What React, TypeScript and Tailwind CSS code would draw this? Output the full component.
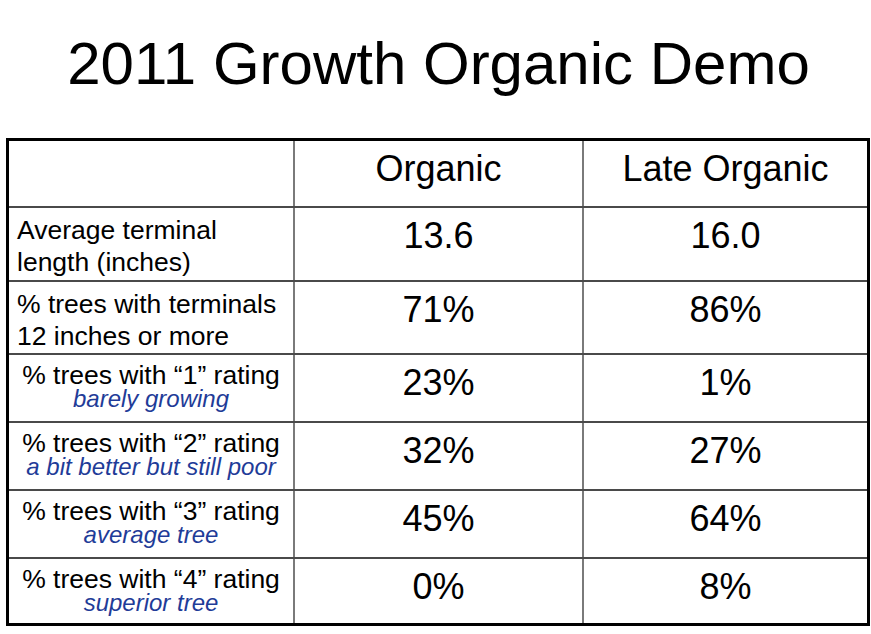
const font = "font-['Liberation_Sans',Arial,sans-serif]";

type Row = {
  label: string[];
  note?: string;
  organic: string;
  late: string;
  h: string;
};

const rows: Row[] = [
  { label: ["Average terminal", "length (inches)"], organic: "13.6", late: "16.0", h: "h-[74px]" },
  { label: ["% trees with terminals", "12 inches or more"], organic: "71%", late: "86%", h: "h-[73px]" },
  { label: ["% trees with \u201c1\u201d rating"], note: "barely growing", organic: "23%", late: "1%", h: "h-[68px]" },
  { label: ["% trees with \u201c2\u201d rating"], note: "a bit better but still poor", organic: "32%", late: "27%", h: "h-[68px]" },
  { label: ["% trees with \u201c3\u201d rating"], note: "average tree", organic: "45%", late: "64%", h: "h-[68px]" },
  { label: ["% trees with \u201c4\u201d rating"], note: "superior tree", organic: "0%", late: "8%", h: "h-[66px]" },
];

function LabelCell({ row }: { row: Row }) {
  // rating rows are centred with a blue italic note under them
  if (row.note) {
    return (
      <div className="pt-[7px] text-center text-black">
        <div className="text-[26.5px] leading-[26px]">{row.label[0]}</div>
        <div className="text-[24px] leading-[22px] italic text-[#1f3c98]">{row.note}</div>
      </div>
    );
  }
  return (
    <div className="pt-[6px] pl-[8px] text-[26.5px] leading-[32px] text-black">
      {row.label.map((l) => (
        <div key={l}>{l}</div>
      ))}
    </div>
  );
}

export default function App() {
  return (
    <div className={`w-[871px] h-[634px] bg-white overflow-hidden ${font}`}>
      <div className="h-[138px] pt-[34px] text-center text-[60px] leading-[60px] text-black pl-[6px]">
        2011 Growth Organic Demo
      </div>
      <div className="ml-[6px] w-[864px] border-[3px] border-black">
        <div className="grid grid-cols-[284px_289px_1fr] h-[65px]">
          <div />
          <div className="border-l-2 border-[#7a7a7a] pt-[8px] text-center text-[36px] leading-[40px]">Organic</div>
          <div className="border-l-2 border-[#7a7a7a] pt-[8px] text-center text-[36px] leading-[40px]">Late Organic</div>
        </div>
        {rows.map((r) => (
          <div
            key={r.organic + r.late}
            className={`grid grid-cols-[284px_289px_1fr] border-t-2 border-[#4a4a4a] ${r.h}`}
          >
            <LabelCell row={r} />
            <div className="border-l-2 border-[#7a7a7a] pt-[8px] text-center text-[36px] leading-[40px]">
              {r.organic}
            </div>
            <div className="border-l-2 border-[#7a7a7a] pt-[8px] text-center text-[36px] leading-[40px]">
              {r.late}
            </div>
          </div>
        ))}
      </div>
    </div>
  );
}
